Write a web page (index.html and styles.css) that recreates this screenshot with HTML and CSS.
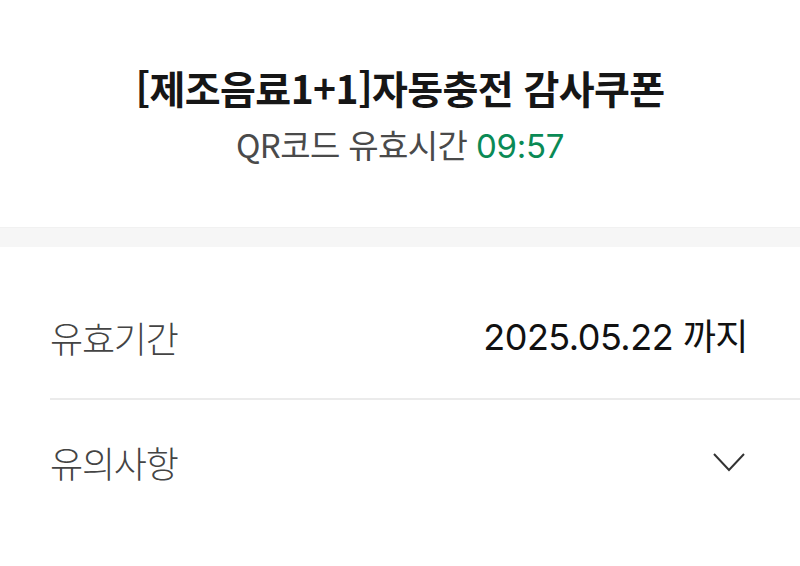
FILE: index.html
```html
<!DOCTYPE html>
<html lang="ko">
<head>
<meta charset="utf-8">
<link rel="stylesheet" href="styles.css">
</head>
<body>
<header class="head">
  <h1 class="title">[제조음료1+1]자동충전 감사쿠폰</h1>
  <p class="sub">QR코드 유효시간 <span class="time">09:57</span></p>
</header>
<div class="band"></div>
<section class="info">
  <div class="row">
    <span class="label">유효기간</span>
    <span class="value">2025.05.22 까지</span>
  </div>
  <div class="row">
    <span class="label">유의사항</span>
    <svg class="chev" width="34" height="22" viewBox="0 0 34 22"><path d="M2 3 L17 19 L32 3" fill="none" stroke="#333" stroke-width="2"/></svg>
  </div>
</section>
</body>
</html>
```
FILE: styles.css
```css
* { box-sizing: border-box; }
html, body { margin: 0; padding: 0; background: #fff; }
body { font-family: "Noto Sans CJK KR", "Noto Sans", sans-serif; color: #111; width: 800px; height: 566px; overflow: hidden; }
.head { height: 227px; display: flex; flex-direction: column; align-items: center; padding-top: 56px; }
.title { margin: 0; font-size: 39px; font-weight: 700; line-height: 62px; color: #161616; letter-spacing: -0.6px; }
.sub { margin: 0; font-size: 33px; line-height: 52px; color: #4a4a4a; font-weight: 400; letter-spacing: -0.6px; }
.time { color: #0a8a55; font-family: "Inter", sans-serif; letter-spacing: -0.3px; }
.band { height: 20px; background: #f6f6f6; border-top: 1px solid #f1f1f1; }
.info { padding-left: 50px; padding-top: 29px; }
.row { display: flex; align-items: center; justify-content: space-between; padding: 30px 52px 30px 0; height: 122px; }
.row + .row { border-top: 2px solid #ebebeb; height: 126px; }
.label { font-size: 36px; color: #444; letter-spacing: -1.2px; line-height: 62px; font-weight: 300; }
.value { font-size: 36px; color: #111; font-family: "Inter", "Noto Sans CJK KR", sans-serif; letter-spacing: -0.5px; line-height: 62px; }
.chev { display: block; margin-right: 2px; }
```
